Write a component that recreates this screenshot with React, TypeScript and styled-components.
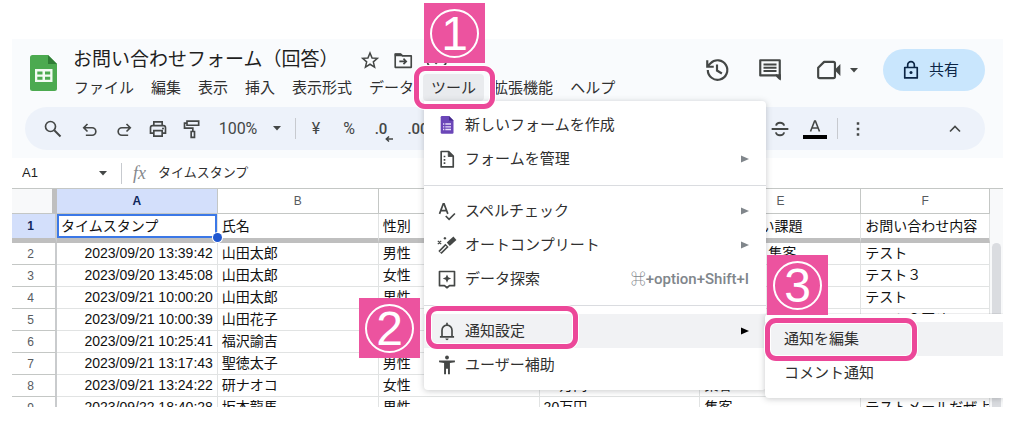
import React from "react";
import styled, { createGlobalStyle, css } from "styled-components";

const ui = `"Liberation Sans", "Noto Sans CJK JP", sans-serif`;
const gothic = `Roboto, "Noto Sans CJK JP", sans-serif`;
const ink = "#444746";

const Global = createGlobalStyle`
  * { box-sizing: border-box; }
  body { margin: 0; background: #fff; color: #1f1f1f; font-family: ${ui}; }
  button { font: inherit; color: inherit; background: none; border: 0; padding: 0; margin: 0; }
`;

const Page = styled.div`
  display: flex;
  height: 100vh;
  min-height: 400px;
  padding: 39px 21px 31px 12px;
`;
const Window = styled.main`
  flex: 1;
  min-width: 0;
  display: flex;
  flex-direction: column;
`;
const Top = styled.header`
  background: #f9fbfd;
  padding: 0 18px 8px 13px;
`;
const TitleBar = styled.div`
  display: flex;
  align-items: flex-start;
  height: 68px;
  padding-left: 5px;
`;
const Logo = styled.svg`
  margin-top: 16px;
  flex: none;
`;
const Names = styled.div`
  padding: 7px 0 0 9px;
`;
const TitleRow = styled.div`
  display: flex;
  align-items: center;
  gap: 12px;
  height: 28px;
  padding-left: 7px;
  color: ${ink};
`;
const Title = styled.h1`
  margin: 0;
  width: 275px;
  font: 400 19px/28px ${gothic};
  color: #1f1f1f;
  white-space: nowrap;
`;
const MenuBar = styled.nav`
  display: flex;
  gap: 1px;
`;
const MenuSlot = styled.div`
  position: relative;
`;
const MenuButton = styled.button<{ $open?: boolean }>`
  height: 27px;
  padding: 2px 8px 0;
  border-radius: 4px;
  font: 400 15px/25px ${gothic};
  white-space: nowrap;
  color: #303030;
  background: ${(p) => (p.$open ? "#e9ebee" : "transparent")};
`;
const Actions = styled.div`
  margin-left: auto;
  display: flex;
  align-items: center;
  height: 62px;
  color: ${ink};
`;
const IconButton = styled.button<{ $w?: number; $gap?: number; $end?: boolean }>`
  display: flex;
  align-items: center;
  justify-content: ${(p) => (p.$end ? "flex-end" : "center")};
  flex: none;
  gap: ${(p) => p.$gap ?? 0}px;
  width: ${(p) => p.$w ?? 34}px;
  height: 32px;
  white-space: nowrap;
  color: ${ink};
`;
const Share = styled.button`
  display: flex;
  align-items: center;
  justify-content: center;
  gap: 8px;
  width: 102px;
  height: 42px;
  margin-left: 25px;
  padding-right: 8px;
  border-radius: 21px;
  background: #c9e6fd;
  color: #0b2545;
  font: 400 15px/42px ${gothic};
`;
const Toolbar = styled.div`
  display: flex;
  align-items: center;
  height: 43px;
  padding: 0 20px 0 11px;
  border-radius: 22px;
  background: #edf2fa;
  color: ${ink};
  font: 400 16px/20px ${gothic};
`;
const Divider = styled.span`
  width: 1px;
  height: 21px;
  background: #c7cacf;
`;
const Spacer = styled.span`
  flex: 1;
`;
const Decimal = styled.span`
  position: relative;
  font-size: 15px;
  font-weight: 500;
  svg { position: absolute; right: -6px; bottom: -3px; }
`;
const FormulaBar = styled.div`
  display: flex;
  align-items: center;
  flex: none;
  height: 30px;
  padding-left: 10px;
  color: ${ink};
`;
const NameBox = styled.input`
  width: 74px;
  border: 0;
  padding: 0;
  outline: 0;
  background: none;
  font: 400 13px/20px ${ui};
  color: #1f1f1f;
`;
const FormulaInput = styled.input`
  flex: 1;
  border: 0;
  padding: 0;
  outline: 0;
  background: none;
  font: 400 13px/20px ${ui};
  color: #303030;
`;
const Fx = styled.span`
  width: 25px;
  font: italic 400 18px/20px "Liberation Serif", serif;
  color: #85888c;
`;
const Sheet = styled.section`
  flex: 1;
  min-height: 0;
  display: flex;
  align-items: flex-start;
  overflow: hidden;
  border-top: 1px solid #c4c7c5;
`;
const Table = styled.table`
  width: 100%;
  min-width: 0;
  table-layout: fixed;
  border-collapse: separate;
  border-spacing: 0;
`;
const ColHead = styled.th<{ $on?: boolean }>`
  height: 25px;
  padding: 0;
  border-right: 1px solid #c4c7c5;
  border-bottom: 1px solid #c4c7c5;
  font: ${(p) => (p.$on ? 700 : 400)} 12px/20px ${ui};
  color: ${(p) => (p.$on ? "#10285c" : "#575b5f")};
  background: ${(p) => (p.$on ? "#d3dffb" : "#fff")};
`;
const Corner = styled.td`
  padding: 0;
  border-right: 5px solid #bfbfbf;
  border-bottom: 1px solid #c4c7c5;
  background: #f8f9fa;
`;
const RowHead = styled.th<{ $on?: boolean }>`
  padding: 0 6px 0 0;
  border-right: 2px solid #c9cbcd;
  border-bottom: 1px solid #c4c7c5;
  font: ${(p) => (p.$on ? 700 : 400)} 12px/20px ${ui};
  color: ${(p) => (p.$on ? "#10285c" : "#575b5f")};
  background: ${(p) => (p.$on ? "#d3dffb" : "#fff")};
`;
const Cell = styled.td<{ $right?: boolean; $selected?: boolean }>`
  position: relative;
  height: 22px;
  padding: 0 4px;
  border-right: 1px solid #e1e3e3;
  border-bottom: 1px solid #e1e3e3;
  font: 400 14px/21px ${ui};
  color: #111;
  white-space: nowrap;
  overflow: ${(p) => (p.$selected ? "visible" : "hidden")};
  text-align: ${(p) => (p.$right ? "right" : "left")};
  ${(p) => p.$selected && css`box-shadow: inset 0 0 0 2px #3b78e7;`}
`;
const FrozenRow = styled.tr`
  > * { height: 29px; border-bottom: 5px solid #bfbfbf; }
`;
const Handle = styled.span`
  position: absolute;
  z-index: 1;
  right: -5px;
  bottom: -4px;
  width: 9px;
  height: 9px;
  border-radius: 50%;
  background: #1f57d0;
  box-shadow: 0 0 0 1px #fff;
`;
const ScrollTrack = styled.div`
  flex: none;
  align-self: stretch;
  width: 13px;
  padding: 54px 2px 0;
  background: #f8f9fa;
`;
const ScrollThumb = styled.div`
  height: 100%;
  border-radius: 6px 6px 0 0;
  background: #dadce0;
`;
const popup = css`
  position: absolute;
  background: #fff;
  box-shadow: 0 1px 6px rgba(60, 64, 67, 0.28);
`;
const Menu = styled.div`
  ${popup}
  z-index: 2;
  top: 100%;
  left: 1px;
  width: 342px;
  padding: 7px 0 8px;
  border-radius: 0 4px 4px 4px;
`;
const Submenu = styled.div`
  ${popup}
  z-index: 3;
  top: 0;
  left: 341px;
  width: 238px;
  padding: 8px 0;
  border-radius: 4px 0 0 4px;
  clip-path: inset(-1px 0 -8px -8px);
`;
const ItemWrap = styled.div`
  position: relative;
`;
const Item = styled.button<{ $active?: boolean; $inset?: boolean }>`
  display: flex;
  align-items: center;
  width: 100%;
  height: 34px;
  padding: 0 17px 0 ${(p) => (p.$inset ? 19 : 13)}px;
  font: 400 15px/34px ${gothic};
  text-align: left;
  color: #303030;
  background: ${(p) => (p.$active ? "#f1f2f4" : "transparent")};
`;
const ItemIcon = styled.span`
  display: flex;
  width: 28px;
  color: ${ink};
`;
const Shortcut = styled.span`
  margin-left: auto;
  color: #80868b;
  font-weight: 500;
`;
const Arrow = styled.svg<{ $dark?: boolean }>`
  margin-left: auto;
  fill: ${(p) => (p.$dark ? "#000" : "#80868b")};
`;
const Rule = styled.hr`
  height: 1px;
  margin: 9px 0 8px;
  border: 0;
  background: #dadce0;
`;
const Ring = styled.span<{ $x: number; $y: number; $w: number }>`
  position: absolute;
  z-index: 4;
  left: ${(p) => p.$x}px;
  top: ${(p) => p.$y}px;
  width: ${(p) => p.$w}px;
  height: 43px;
  border: 5px solid #ec4899;
  border-radius: 11px;
  box-shadow: 0 0 0 1px #fff, inset 0 0 0 1px #fff;
  pointer-events: none;
`;
const BadgeBox = styled.span<{ $x: number; $y: number }>`
  position: absolute;
  z-index: 5;
  left: ${(p) => p.$x}px;
  top: ${(p) => p.$y}px;
  display: flex;
  align-items: center;
  justify-content: center;
  width: 61px;
  height: 60px;
  background: #ec539f;
`;
const BadgeCircle = styled.span`
  width: 49px;
  height: 49px;
  border: 2px solid #fff;
  border-radius: 50%;
  color: #fff;
  font: 400 48px/46px "Liberation Sans", sans-serif;
  text-align: center;
`;
const Badge = ({ $x, $y, children }: { $x: number; $y: number; children: React.ReactNode }) => (
  <BadgeBox $x={$x} $y={$y}>
    <BadgeCircle>{children}</BadgeCircle>
  </BadgeBox>
);

const Svg = ({ s = 20, children }: { s?: number; children: React.ReactNode }) => (
  <svg width={s} height={s} viewBox="0 0 24 24" fill="none" stroke="currentColor" strokeWidth="2" aria-hidden="true">
    {children}
  </svg>
);
const Caret = () => (
  <svg width="8" height="5" viewBox="0 0 8 5" fill="currentColor" aria-hidden="true">
    <path d="M0 0h8L4 4.6z" />
  </svg>
);
const MoreArrow = ({ dark }: { dark?: boolean }) => (
  <Arrow $dark={dark} width="8" height="8" viewBox="0 0 8 8" aria-hidden="true">
    <path d="M0 0.5L8 4L0 7.5z" />
  </Arrow>
);

const icons = {
  form: (
    <svg width="20" height="18" viewBox="0 0 20 18" aria-hidden="true">
      <path d="M5 0h7l4.500 4.500V16.500q0 1.200-1.200 1.200H5q-1.300 0-1.300-1.200V1.300Q3.700 0 5 0z" fill="#6b46b8" />
      <path d="M12 0l4.500 4.500H12z" fill="#44298a" />
      <path d="M6 8h1.300M6 10.800h1.300M6 13.500h1.300M8.300 8h5.700M8.300 10.800h5.700M8.300 13.500h5.700" stroke="#e8defa" strokeWidth="1.300" />
    </svg>
  ),
  manage: (
    <Svg>
      <path d="M5 3h9L19.500 8.500V21.500H5z" strokeLinejoin="round" />
      <path d="M13.500 3v6H19z" fill="currentColor" strokeWidth="1" />
      <path d="M8 9h2M8 13h2M8 17h2" />
    </Svg>
  ),
  spell: (
    <Svg>
      <path d="M3 15.500L7.500 3.500h1L13 15.500M4.500 11.500h7M10.500 18l4 4 7-7" />
    </Svg>
  ),
  auto: (
    <Svg>
      <path d="M3.500 21L12 12.500" strokeWidth="5.500" />
      <path d="M13.500 11L21.500 4" strokeWidth="5.500" />
      <path d="M4 20.500l7-7" stroke="#fff" strokeWidth="1.500" />
      <path d="M1 7l4 4M5 7l-4 4M9.500 2.500v3M8 4h3" strokeWidth="1.500" />
    </Svg>
  ),
  explore: (
    <Svg>
      <path d="M3 3h18v17h-6l-3 2.500L9 20H3z" strokeLinejoin="round" />
      <path d="M12 6.500l1.500 3.500L17 11.500l-3.500 1.500L12 16.500l-1.500-3.500L7 11.500l3.500-1.500z" fill="currentColor" stroke="none" />
    </Svg>
  ),
  bell: (
    <Svg>
      <path d="M3.500 19h17M6 19v-8a6 6 0 0 1 12 0v8M12 5V2" />
      <path d="M10 21h4q-.5 2-2 2t-2-2z" fill="currentColor" stroke="none" />
    </Svg>
  ),
  person: (
    <Svg>
      <circle cx="12" cy="3" r="2.300" fill="currentColor" stroke="none" />
      <path d="M2.500 6.500h19v2.200L15.500 9.500V23h-2.300v-6.500h-2.400V23H8.500V9.500L2.500 8.700z" fill="currentColor" stroke="none" />
    </Svg>
  ),
};

const rows = [
  ["2023/09/20 13:39:42", "山田太郎", "男性", "", "人材採用, 集客", "テスト"],
  ["2023/09/20 13:45:08", "山田太郎", "女性", "", "", "テスト３"],
  ["2023/09/21 10:00:20", "山田太郎", "男性", "", "", "テスト"],
  ["2023/09/21 10:00:39", "山田花子", "", "", "", "テスト３回め"],
  ["2023/09/21 10:25:41", "福沢諭吉", "", "", "", ""],
  ["2023/09/21 13:17:43", "聖徳太子", "男性", "", "", ""],
  ["2023/09/21 13:24:22", "研ナオコ", "女性", "30万円", "集客", ""],
  ["2023/09/22 18:40:28", "坂本龍馬", "男性", "20万円", "集客", "テストメールだぜよ"],
];

export default function App() {
  return (
    <>
      <Global />
      <Page>
        <Window>
          <Top>
            <TitleBar>
              <Logo width="27" height="36" viewBox="0 0 27 36" role="img" aria-label="スプレッドシート">
                <path d="M2.500 0H18l9 9v24.500q0 2.500-2.500 2.500h-22Q0 36 0 33.500v-31Q0 0 2.500 0z" fill="#4caa50" />
                <path d="M18 0l9 9h-9z" fill="#2f7d35" />
                <path d="M5 14h17.500v13H5z" fill="#f3fbf3" />
                <path d="M7.300 16.500h5.200v3H7.300zM15 16.500h5.200v3H15zM7.300 21.700h5.200v3H7.300zM15 21.700h5.200v3H15z" fill="#4caa50" />
              </Logo>
              <Names>
                <TitleRow>
                  <Title>お問い合わせフォーム（回答）</Title>
                  <Svg s={20}>
                    <path d="M12 3.500l2.500 6 6.300.5-4.800 4.200 1.500 6.300-5.500-3.400-5.500 3.400L8 14.200 3.200 10l6.300-.5z" strokeWidth="1.800" />
                  </Svg>
                  <Svg s={22}>
                    <path d="M3.500 5.500h6l2 2h9.500V20H3.500z" strokeWidth="1.800" strokeLinejoin="round" />
                    <path d="M3 5h6.500l2 3H3z" fill="currentColor" stroke="none" />
                    <path d="M8 13.500h7M12.500 10.500l3 3-3 3" strokeWidth="1.800" />
                  </Svg>
                  <Svg s={22}>
                    <path d="M6.500 19a4.500 4.500 0 0 1-.5-9 6.500 6.500 0 0 1 12-.5 5 5 0 0 1 .5 9.500zM8.500 13l2.500 2.500 4.500-4.500" />
                  </Svg>
                </TitleRow>
                <MenuBar>
                  {["ファイル", "編集", "表示", "挿入", "表示形式", "データ"].map((m) => (
                    <MenuButton key={m}>{m}</MenuButton>
                  ))}
                  <MenuSlot>
                    <MenuButton $open>ツール</MenuButton>
                    <Badge $x={1} $y={-71}>1</Badge>
                    <Ring $x={-9} $y={-8} $w={81} />
                    <Menu>
                      <Item><ItemIcon>{icons.form}</ItemIcon>新しいフォームを作成</Item>
                      <Item><ItemIcon>{icons.manage}</ItemIcon>フォームを管理<MoreArrow /></Item>
                      <Rule />
                      <Item><ItemIcon>{icons.spell}</ItemIcon>スペルチェック<MoreArrow /></Item>
                      <Item><ItemIcon>{icons.auto}</ItemIcon>オートコンプリート<MoreArrow /></Item>
                      <Item><ItemIcon>{icons.explore}</ItemIcon>データ探索<Shortcut>⌘+option+Shift+I</Shortcut></Item>
                      <Rule />
                      <ItemWrap>
                        <Item $active><ItemIcon>{icons.bell}</ItemIcon>通知設定<MoreArrow dark /></Item>
                        <Badge $x={-65} $y={-16}>2</Badge>
                        <Ring $x={2} $y={-8} $w={152} />
                        <Submenu>
                          <Item $active $inset>通知を編集</Item>
                          <Item $inset>コメント通知</Item>
                        </Submenu>
                        <Badge $x={343} $y={-59}>3</Badge>
                        <Ring $x={341} $y={4} $w={152} />
                      </ItemWrap>
                      <Item><ItemIcon>{icons.person}</ItemIcon>ユーザー補助</Item>
                    </Menu>
                  </MenuSlot>
                  <MenuButton>拡張機能</MenuButton>
                  <MenuButton>ヘルプ</MenuButton>
                </MenuBar>
              </Names>
              <Actions>
                <IconButton $w={53} aria-label="変更履歴">
                  <Svg s={26}>
                    <path d="M3.500 12a9 9 0 1 0 2.600-6.300L3.500 8.300M3 3v6h6M12 7v5.500l4.500 2.700" />
                  </Svg>
                </IconButton>
                <IconButton $w={53} aria-label="コメント">
                  <Svg s={26}>
                    <path d="M3 3h18v17l-3-3H3z" strokeLinejoin="round" />
                    <path d="M6 7h12M6 10h12M6 13h12" strokeWidth="1.800" />
                    <path d="M17 16h5v6z" fill="currentColor" stroke="none" />
                  </Svg>
                </IconButton>
                <IconButton $w={62} $gap={8} $end aria-label="通話">
                  <Svg s={26}>
                    <path d="M7.500 4.500H16q1.500 0 1.500 1.500v12q0 1.500-1.500 1.500H3.500Q2 19.500 2 18v-8z" strokeLinejoin="round" />
                    <path d="M18 11l4.500-4.500v11L18 13z" fill="currentColor" stroke="none" />
                  </Svg>
                  <Caret />
                </IconButton>
                <Share>
                  <Svg s={20}>
                    <path d="M4.500 9h15v12.500h-15zM8 9V6a4 4 0 0 1 8 0v3" strokeLinejoin="round" />
                    <circle cx="12" cy="15" r="1.800" fill="currentColor" stroke="none" />
                  </Svg>
                  共有
                </Share>
              </Actions>
            </TitleBar>
            <Toolbar>
              <IconButton aria-label="検索">
                <Svg><circle cx="9" cy="9" r="6" /><path d="M13.500 13.500L21 21" strokeWidth="2.400" /></Svg>
              </IconButton>
              <IconButton $w={40} aria-label="元に戻す">
                <Svg><path d="M9 6L4.500 10.500 9 15M5 10.500h9.500a4.500 4.500 0 0 1 0 9H7" /></Svg>
              </IconButton>
              <IconButton $w={28} aria-label="やり直し">
                <Svg><path d="M15 6l4.500 4.500L15 15M19 10.500H9.500a4.500 4.500 0 0 0 0 9H17" /></Svg>
              </IconButton>
              <IconButton $w={40} aria-label="印刷">
                <Svg><path d="M7 8V3.500h10V8M7 17H3v-6.500Q3 8 5.500 8h13Q21 8 21 10.500V17h-4M7 14h10v6.500H7z" /><circle cx="18" cy="11.500" r="1.200" fill="currentColor" stroke="none" /></Svg>
              </IconButton>
              <IconButton $w={28} aria-label="書式を貼り付け">
                <Svg><path d="M6 2.500h14v5H6zM6 5H3v6h10v4M11 15h4v7h-4z" /></Svg>
              </IconButton>
              <IconButton $w={64}>100%</IconButton>
              <IconButton $w={14} aria-label="倍率を選択"><Caret /></IconButton>
              <IconButton $w={22} as="span"><Divider /></IconButton>
              <IconButton $w={20}>¥</IconButton>
              <IconButton $w={46}>%</IconButton>
              <IconButton $w={18} aria-label="小数点以下の桁数を減らす">
                <Decimal>.0<svg width="8" height="6" viewBox="0 0 8 6" fill="none" stroke="currentColor" strokeWidth="1.500"><path d="M8 3H1.500M4 .5L1.300 3 4 5.500" /></svg></Decimal>
              </IconButton>
              <IconButton $w={56} aria-label="小数点以下の桁数を増やす">
                <Decimal>.00<svg width="8" height="6" viewBox="0 0 8 6" fill="none" stroke="currentColor" strokeWidth="1.500"><path d="M0 3h6.500M4 .5L6.700 3 4 5.500" /></svg></Decimal>
              </IconButton>
              <Spacer />
              <IconButton aria-label="取り消し線">
                <Svg><path d="M2 12h20M17 8q-.8-3.500-5-3.500T7.300 8M7 16q.8 3.500 5 3.500t5-3.500" strokeWidth="2.200" /></Svg>
              </IconButton>
              <IconButton $w={36} aria-label="テキストの色">
                <svg width="24" height="24" viewBox="0 0 24 24" fill="none" stroke="currentColor" strokeWidth="1.600">
                  <path d="M7.500 14.500L11.600 4h.8l4.100 10.500M9 11h6" />
                  <path d="M0 18h24v4H0z" fill="#000" stroke="none" />
                </svg>
              </IconButton>
              <IconButton $w={8} as="span"><Divider /></IconButton>
              <IconButton aria-label="その他">
                <Svg><path d="M12 4v3M12 10.500v3M12 17v3" strokeWidth="3" /></Svg>
              </IconButton>
              <IconButton $w={90} $end aria-label="メニューを非表示">
                <Svg s={20}><path d="M6 15l6-6 6 6" /></Svg>
              </IconButton>
            </Toolbar>
          </Top>
          <FormulaBar>
            <NameBox aria-label="名前ボックス" defaultValue="A1" />
            <IconButton $w={14} aria-label="範囲を選択"><Caret /></IconButton>
            <IconButton $w={23} as="span"><Divider /></IconButton>
            <Fx>fx</Fx>
            <FormulaInput aria-label="数式" defaultValue="タイムスタンプ" />
          </FormulaBar>
          <Sheet>
            <Table>
              <colgroup>
                <col width="4.6%" />
                {[0, 1, 2, 3, 4].map((c) => <col key={c} width="16.45%" />)}
                <col />
              </colgroup>
              <thead>
                <tr>
                  <Corner />
                  {["A", "B", "C", "D", "E", "F"].map((c) => (
                    <ColHead key={c} scope="col" $on={c === "A"}>{c}</ColHead>
                  ))}
                </tr>
              </thead>
              <tbody>
                <FrozenRow>
                  <RowHead scope="row" $on>1</RowHead>
                  <Cell $selected>タイムスタンプ<Handle /></Cell>
                  <Cell>氏名</Cell>
                  <Cell>性別</Cell>
                  <Cell />
                  <Cell>解決したい課題</Cell>
                  <Cell>お問い合わせ内容</Cell>
                </FrozenRow>
                {rows.map((r, i) => (
                  <tr key={i}>
                    <RowHead scope="row">{i + 2}</RowHead>
                    {r.map((v, j) => <Cell key={j} $right={j === 0}>{v}</Cell>)}
                  </tr>
                ))}
              </tbody>
            </Table>
            <ScrollTrack><ScrollThumb /></ScrollTrack>
          </Sheet>
        </Window>
      </Page>
    </>
  );
}
